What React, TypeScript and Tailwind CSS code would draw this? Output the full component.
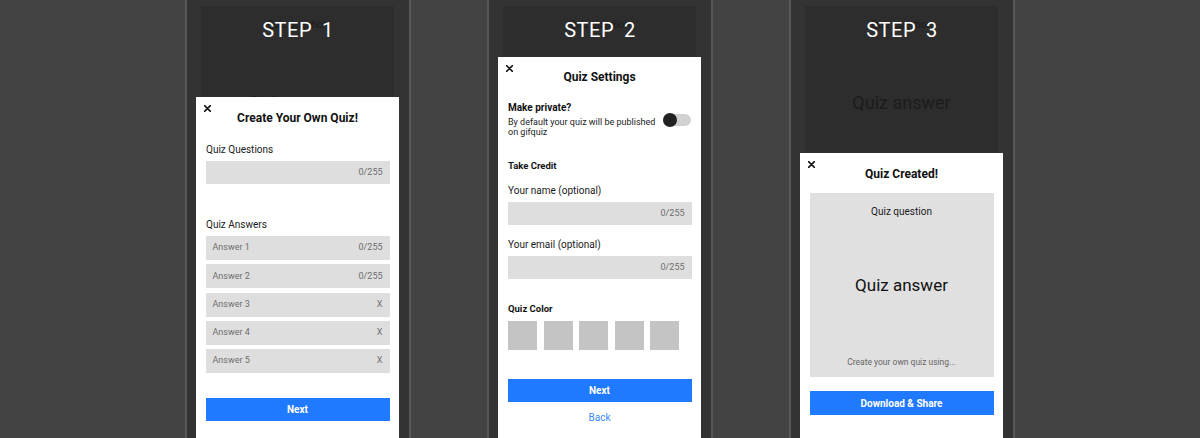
import React from 'react';

const font = { fontFamily: 'Roboto, "Liberation Sans", sans-serif' };

function CloseIcon() {
  return (
    <svg width="7" height="7" viewBox="0 0 7 7" className="absolute left-[7.5px] top-[7.5px]">
      <path d="M0.6 0.6 L6.4 6.4 M6.4 0.6 L0.6 6.4" stroke="#111" strokeWidth="1.5" strokeLinecap="round" />
    </svg>
  );
}

function Field({ placeholder, right, tall }: { placeholder?: string; right: string; tall?: boolean }) {
  return (
    <div
      className={
        (tall ? 'h-[24px] ' : 'h-[23px] ') +
        'w-[184px] mx-auto bg-[#dedede] flex items-center justify-between pl-[7px] pr-[7px] text-[9px] text-[#6e6e6e]'
      }
    >
      <span>{placeholder}</span>
      <span>{right}</span>
    </div>
  );
}

function Phone({ step, children }: { step: number; children: React.ReactNode }) {
  return (
    <div className="relative w-[226px] h-[438px] bg-[#333333] border-x-2 border-[#585858] shrink-0">
      {/* dimmed screen behind the modal */}
      <div className="ml-[14px] mt-[6px] w-[193px] h-[200px] bg-[#2d2d2d] flex flex-col items-center text-[#1c1c1c]">
        <div className="mt-[13px] text-[10px] leading-[12px]">Quiz question</div>
        <div className="mt-[61px] text-[18px] leading-[22px]">Quiz answer</div>
      </div>
      <div className="absolute top-[19px] left-0 right-0 flex justify-center text-white text-[20px] leading-[22px] tracking-[0.5px]">
        <span>STEP</span>
        <span className="ml-[10px]">{step}</span>
      </div>
      {children}
    </div>
  );
}

function StepOne() {
  return (
    <div className="absolute left-[9px] top-[97px] w-[203px] h-[360px] bg-white">
      <CloseIcon />
      <div className="pt-[14px] text-center text-[12px] leading-[14px] font-bold text-[#111]">Create Your Own Quiz!</div>
      <div className="px-[10px] mt-[19px] text-[10px] leading-[12px] text-[#1a1a1a]">Quiz Questions</div>
      <div className="mt-[5px]">
        <Field right="0/255" />
      </div>
      <div className="px-[10px] mt-[35px] text-[10px] leading-[12px] text-[#1a1a1a]">Quiz Answers</div>
      <div className="mt-[5px] flex flex-col gap-[4.25px]">
        <Field tall placeholder="Answer 1" right="0/255" />
        <Field tall placeholder="Answer 2" right="0/255" />
        <Field tall placeholder="Answer 3" right="X" />
        <Field tall placeholder="Answer 4" right="X" />
        <Field tall placeholder="Answer 5" right="X" />
      </div>
      <button className="block mx-auto mt-[25px] w-[184px] h-[23px] bg-[#1f7aff] text-white text-[10px] font-bold">Next</button>
    </div>
  );
}

function StepTwo() {
  return (
    <div className="absolute left-[9px] top-[57px] w-[203px] h-[400px] bg-white">
      <CloseIcon />
      <div className="pt-[13px] text-center text-[12px] leading-[14px] font-bold text-[#111]">Quiz Settings</div>
      <div className="relative px-[10px]">
        <div className="mt-[18px] text-[10px] leading-[12px] font-bold text-[#111]">Make private?</div>
        <div className="mt-[3px] w-[148px] text-[9px] leading-[10px] text-[#222]">
          By default your quiz will be published on gifquiz
        </div>
        <div className="absolute right-[10px] top-[11px] w-[28px] h-[14px] flex items-center">
          <div className="w-[28px] h-[12px] rounded-full bg-[#d1d1d1]" />
          <div className="absolute left-0 top-0 w-[14px] h-[14px] rounded-full bg-[#222222]" />
        </div>
      </div>
      <div className="px-[10px] mt-[23px] text-[9.5px] leading-[12px] font-bold text-[#111]">Take Credit</div>
      <div className="px-[10px] mt-[13px] text-[10px] leading-[12px] text-[#1a1a1a]">Your name (optional)</div>
      <div className="mt-[5px]">
        <Field right="0/255" />
      </div>
      <div className="px-[10px] mt-[14px] text-[10px] leading-[12px] text-[#1a1a1a]">Your email (optional)</div>
      <div className="mt-[5px]">
        <Field right="0/255" />
      </div>
      <div className="px-[10px] mt-[24px] text-[9.5px] leading-[12px] font-bold text-[#111]">Quiz Color</div>
      <div className="px-[10px] mt-[6px] flex gap-[6.5px]">
        {[0, 1, 2, 3, 4].map((i) => (
          <div key={i} className="w-[29px] h-[29px] bg-[#c4c4c4]" />
        ))}
      </div>
      <button className="block mx-auto mt-[29px] w-[184px] h-[23px] bg-[#1f7aff] text-white text-[10px] font-bold">Next</button>
      <div className="mt-[10px] text-center text-[10px] leading-[12px] text-[#3a8bff]">Back</div>
    </div>
  );
}

function StepThree() {
  return (
    <div className="absolute left-[9px] top-[153px] w-[203px] h-[300px] bg-white">
      <CloseIcon />
      <div className="pt-[14px] text-center text-[12px] leading-[14px] font-bold text-[#111]">Quiz Created!</div>
      <div className="mx-auto mt-[12px] w-[184px] h-[184px] bg-[#e0e0e0] flex flex-col items-center">
        <div className="mt-[13px] text-[10px] leading-[12px] text-[#1a1a1a]">Quiz question</div>
        <div className="mt-[56px] text-[17px] leading-[22px] text-[#111]">Quiz answer</div>
        <div className="mt-[61px] text-[8.5px] leading-[10px] text-[#666]">Create your own quiz using...</div>
      </div>
      <button className="block mx-auto mt-[14px] w-[184px] h-[24px] bg-[#1f7aff] text-white text-[10px] font-bold">
        Download &amp; Share
      </button>
    </div>
  );
}

export default function App() {
  return (
    <div style={font} className="w-[1200px] h-[438px] overflow-hidden bg-[#434343] flex justify-center gap-[76px]">
      <Phone step={1}>
        <StepOne />
      </Phone>
      <Phone step={2}>
        <StepTwo />
      </Phone>
      <Phone step={3}>
        <StepThree />
      </Phone>
    </div>
  );
}
